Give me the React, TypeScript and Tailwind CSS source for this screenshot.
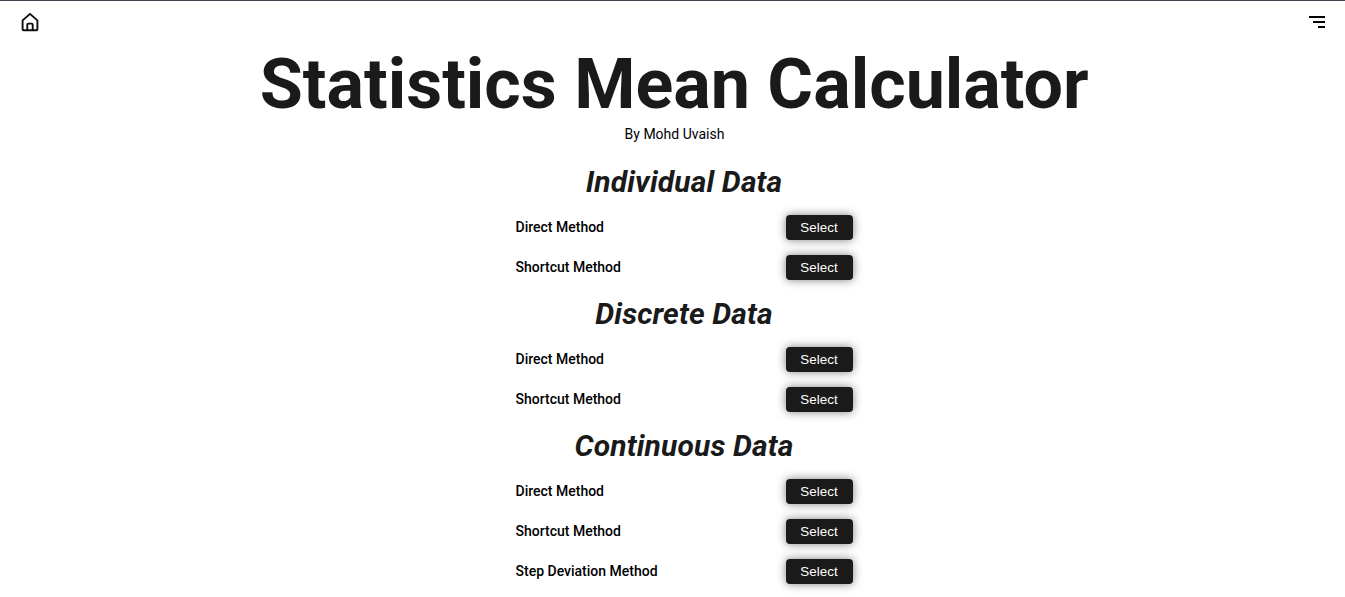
const groups = [
  { title: "Individual Data", methods: ["Direct Method", "Shortcut Method"] },
  { title: "Discrete Data", methods: ["Direct Method", "Shortcut Method"] },
  { title: "Continuous Data", methods: ["Direct Method", "Shortcut Method", "Step Deviation Method"] },
];

function HomeIcon() {
  return (
    <svg width="20" height="20" viewBox="0 0 20 20" fill="none" stroke="#0d0d0d" strokeWidth="1.9" strokeLinejoin="round">
      <path d="M2.6 8.4 10 1.9 17.4 8.4V17.3Q17.4 18.3 16.4 18.3H3.6Q2.6 18.3 2.6 17.3Z" />
      <path d="M7.3 18V12.6Q7.3 11.6 8.3 11.6H11.7Q12.7 11.6 12.7 12.6V18" />
    </svg>
  );
}

function MenuIcon() {
  return (
    <svg width="16" height="12" viewBox="0 0 16 12" fill="#000">
      <path d="M0 0h16v2H0zM4 5h12v2H4zM9 10h7v2H9z" />
    </svg>
  );
}

export default function App() {
  return (
    <div className="h-[597px] overflow-hidden border-t border-[#42414d] bg-white font-['Roboto',sans-serif] text-black">
      <header className="flex h-[42px] items-center justify-between px-5">
        <HomeIcon />
        <MenuIcon />
      </header>
      <main className="flex flex-col items-center">
        <h1 className="h-[82px] pl-[3.5px] text-[70px] leading-[82px] font-bold text-[#1a1a1a]">Statistics Mean Calculator</h1>
        <p className="h-[18px] pl-1 text-sm leading-[18px]">By Mohd Uvaish</p>
        <div className="mt-[18px] ml-[23px] w-[337px]">
          {groups.map((group) => (
            <section key={group.title} className="mb-[12px]">
              <h2 className="h-[40px] text-center text-[30px] leading-[42px] font-bold tracking-[0.14px] text-[#1a1a1a] italic">
                {group.title}
              </h2>
              {group.methods.map((method) => (
                <div key={method} className="flex h-[40px] items-center justify-between pt-[12px]">
                  <span className="text-sm font-medium">{method}</span>
                  <button className="h-[25px] w-[67px] rounded-[4px] bg-[#1a1a1a] pt-px font-['Liberation_Sans',sans-serif] text-[13.333px] tracking-[0.08px] text-white shadow-[0_0_10px_rgba(0,0,0,0.5)]">
                    Select
                  </button>
                </div>
              ))}
            </section>
          ))}
        </div>
      </main>
    </div>
  );
}
